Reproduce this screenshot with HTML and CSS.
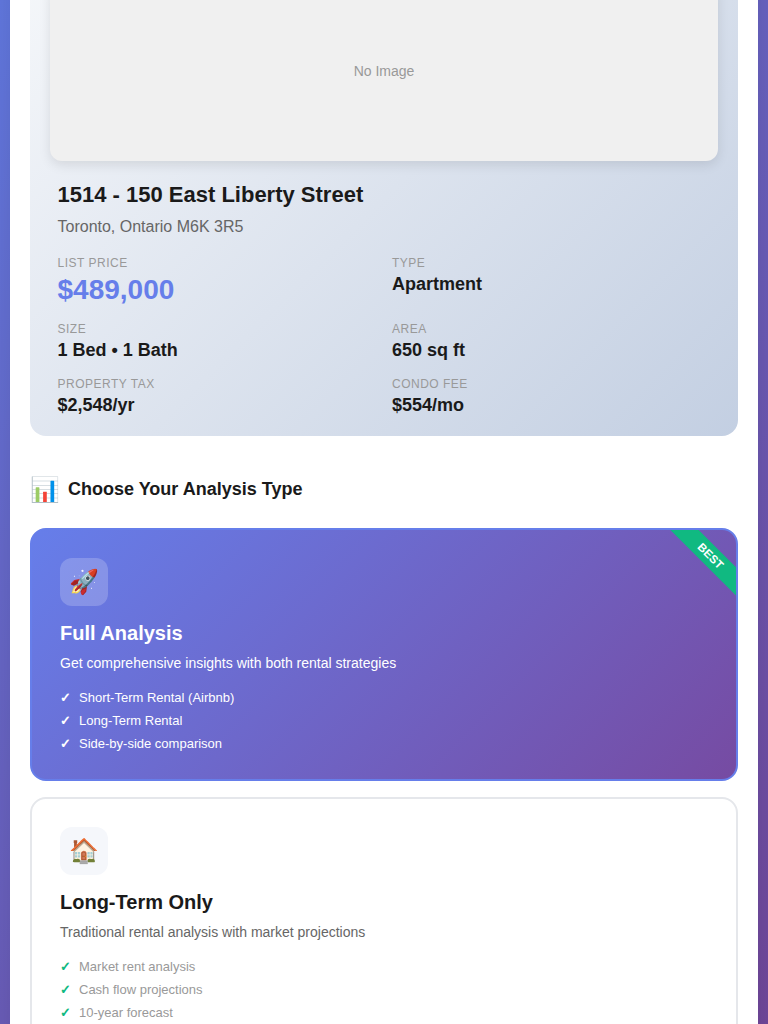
FILE: index.html
```html
<!DOCTYPE html>
<html lang="en">
<head>
<meta charset="utf-8">
<title>Property Analysis</title>
<link rel="stylesheet" href="styles.css">
</head>
<body>
<main class="container">
  <section class="property">
    <div class="photo">No Image</div>
    <div class="info">
      <h1 class="address">1514 - 150 East Liberty Street</h1>
      <p class="city">Toronto, Ontario M6K 3R5</p>
      <div class="details">
        <div class="detail"><span class="label">List Price</span><span class="value price">$489,000</span></div>
        <div class="detail"><span class="label">Type</span><span class="value">Apartment</span></div>
        <div class="detail"><span class="label">Size</span><span class="value">1 Bed • 1 Bath</span></div>
        <div class="detail"><span class="label">Area</span><span class="value">650 sq ft</span></div>
        <div class="detail"><span class="label">Property Tax</span><span class="value">$2,548/yr</span></div>
        <div class="detail"><span class="label">Condo Fee</span><span class="value">$554/mo</span></div>
      </div>
    </div>
  </section>
  <h2 class="heading"><span class="heading-icon">📊</span>Choose Your Analysis Type</h2>
  <div class="options">
    <article class="option featured">
      <span class="ribbon">BEST</span>
      <div class="icon">🚀</div>
      <h3 class="title">Full Analysis</h3>
      <p class="description">Get comprehensive insights with both rental strategies</p>
      <ul class="features">
        <li>Short-Term Rental (Airbnb)</li>
        <li>Long-Term Rental</li>
        <li>Side-by-side comparison</li>
      </ul>
    </article>
    <article class="option">
      <div class="icon">🏠</div>
      <h3 class="title">Long-Term Only</h3>
      <p class="description">Traditional rental analysis with market projections</p>
      <ul class="features">
        <li>Market rent analysis</li>
        <li>Cash flow projections</li>
        <li>10-year forecast</li>
      </ul>
    </article>
  </div>
</main>
</body>
</html>
```
FILE: styles.css
```css
* {
  box-sizing: border-box;
  margin: 0;
  padding: 0;
}

html {
  height: 1024px;
  overflow: hidden;
  background: linear-gradient(135deg, #667eea 0%, #764ba2 100%);
}

body {
  display: flow-root;
  height: 1024px;
  overflow: hidden;
  padding: 0 10px;
  font-family: "Liberation Sans", Arial, sans-serif;
  color: #1a1a1a;
}

.container {
  height: 1300px;
  margin-top: -139px;
  padding: 100px 20px 0;
  background: #fff;
  box-shadow: 0 0 60px rgba(0, 0, 0, 0.2);
}

.property {
  height: 475px;
  padding: 20px 20px 0;
  border-radius: 16px;
  background: linear-gradient(135deg, #f5f7fa 0%, #c3cfe2 100%);
}

.photo {
  height: 180px;
  border-radius: 12px;
  background: #f0f0f0;
  box-shadow: 0 4px 12px rgba(0, 0, 0, 0.1);
  color: #999;
  font-size: 14px;
  line-height: 180px;
  text-align: center;
}

.info {
  padding: 20px 7.5px 0;
}

.address {
  font-size: 22px;
  line-height: 28px;
}

.city {
  margin-top: 9px;
  color: #666;
  font-size: 16px;
  line-height: 18px;
}

.details {
  display: grid;
  grid-template-columns: 1fr 1fr;
  gap: 16px;
  margin-top: 20px;
}

.detail {
  display: flex;
  flex-direction: column;
  gap: 4px;
}

.label {
  color: #999;
  font-size: 12px;
  line-height: 14px;
  letter-spacing: 0.5px;
  text-transform: uppercase;
}

.value {
  font-size: 18px;
  font-weight: 700;
  line-height: 21px;
}

.price {
  color: #667eea;
  font-size: 28px;
  line-height: 32px;
}

.heading {
  display: flex;
  align-items: center;
  gap: 8px;
  height: 32px;
  margin: 37px 0 23px;
  font-size: 18px;
}

.heading-icon {
  padding-top: 2px;
  font-size: 24px;
  font-weight: 400;
}

.options {
  display: flex;
  flex-direction: column;
  gap: 16px;
}

.option {
  position: relative;
  height: 253px;
  padding: 28px;
  overflow: hidden;
  border: 2px solid #e5e7eb;
  border-radius: 16px;
  background: #fff;
}

.icon {
  display: flex;
  align-items: center;
  justify-content: center;
  width: 48px;
  height: 48px;
  border-radius: 12px;
  background: #f5f7fb;
  font-size: 24px;
}

.title {
  margin-top: 16px;
  font-size: 20px;
  line-height: 23px;
}

.description {
  margin-top: 8px;
  color: #666;
  font-size: 14px;
  line-height: 21px;
}

.features {
  margin-top: 12px;
  list-style: none;
  color: #999;
  font-size: 13px;
  line-height: 15px;
}

.features li {
  display: flex;
  gap: 8px;
  padding: 4px 0;
}

.features li::before {
  content: "✓";
  color: #10b981;
  font-weight: 700;
}

.featured {
  border-color: #667eea;
  background: linear-gradient(135deg, #667eea 0%, #764ba2 100%);
  color: #fff;
}

.featured .icon {
  background: rgba(255, 255, 255, 0.2);
}

.featured .description,
.featured .features,
.featured .features li::before {
  color: #fff;
}

.ribbon {
  position: absolute;
  top: 16px;
  right: -30px;
  padding: 4px 40px;
  background: #10b981;
  font-size: 11.5px;
  font-weight: 700;
  line-height: 12px;
  letter-spacing: 0.1px;
  transform: rotate(45deg);
}
```
